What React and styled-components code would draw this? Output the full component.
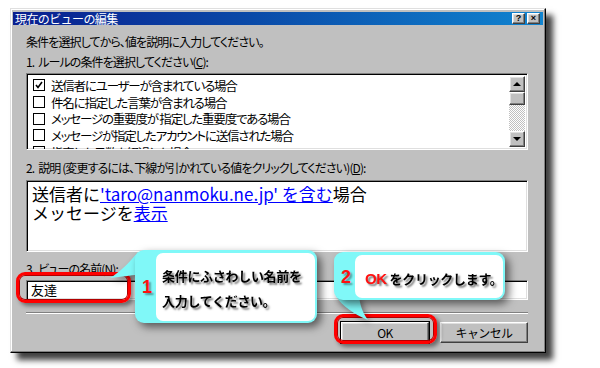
import React from 'react';
import styled, { createGlobalStyle, css } from 'styled-components';

const GlobalStyle = createGlobalStyle`
  html, body {
    margin: 0;
    padding: 0;
    background: #ffffff;
  }
  body {
    font-family: "Noto Sans CJK JP", "Liberation Sans", sans-serif;
    font-size: 12px;
    color: #000;
  }
`;

const jp = `"Noto Sans CJK JP", "Liberation Sans", sans-serif`;

const raised = css`
  border-style: solid;
  border-width: 1px;
  border-color: #ffffff #404040 #404040 #ffffff;
  box-shadow: inset -1px -1px 0 #808080, inset 1px 1px 0 #dfdfdf;
`;

const sunken = css`
  border-style: solid;
  border-width: 1px;
  border-color: #808080 #ffffff #ffffff #808080;
  box-shadow: inset 1px 1px 0 #000000, inset -1px -1px 0 #dfdfdf;
`;

const Page = styled.div`
  position: relative;
  width: 600px;
  height: 368px;
  overflow: hidden;
  padding: 8px 0 0 10px;
  box-sizing: border-box;
`;

const Dialog = styled.div`
  width: 536px;
  height: 345px;
  box-sizing: border-box;
  background: #c0c0c0;
  border-style: solid;
  border-width: 1px;
  border-color: #dfdfdf #000000 #000000 #dfdfdf;
  box-shadow: inset -1px -1px 0 #808080, inset 1px 1px 0 #ffffff,
    7px 7px 6px rgba(0, 0, 0, 0.75);
  padding: 3px 2px 2px 2px;
  display: flex;
  flex-direction: column;
`;

const TitleBar = styled.div`
  height: 13px;
  display: flex;
  align-items: center;
  justify-content: space-between;
  padding: 0 3px 0 2px;
  background: linear-gradient(to right, #0a1f8f 0%, #0a4aa8 45%, #1084d0 100%);
  color: #fff;
  font-size: 12px;
  line-height: 13px;
`;

const TitleText = styled.span`
  letter-spacing: -0.6px;
`;

const TitleButtons = styled.div`
  display: flex;
  gap: 2px;
`;

const TitleButton = styled.div`
  ${raised};
  width: 11px;
  height: 9px;
  background: #c0c0c0;
  color: #000;
  font: bold 9px/9px "Liberation Sans", sans-serif;
  text-align: center;
`;

const Body = styled.div`
  display: flex;
  flex-direction: column;
  padding: 10px 15px 0 13px;
`;

const Label = styled.div`
  font-size: 12px;
  line-height: 14px;
  letter-spacing: -0.9px;
  margin-top: ${(p) => p.$mt || 0}px;
  font-feature-settings: "palt";
  white-space: nowrap;
`;

const Num0 = styled.span`
  margin-right: 4px;
`;

const Key = styled.span`
  text-decoration: underline;
`;

const ListBox = styled.div`
  ${sunken};
  margin-top: 4px;
  height: 77px;
  background: #fff;
  display: flex;
  box-sizing: border-box;
  padding: 2px 2px 2px 2px;
  overflow: hidden;
`;

const ListItems = styled.div`
  flex: 1;
  padding: 1px 0 0 4px;
`;

const ListRow = styled.div`
  display: flex;
  align-items: center;
  height: 16.7px;
  font-size: 12.5px;
  letter-spacing: -1.2px;
  font-feature-settings: "palt";
  white-space: nowrap;
`;

const CheckBox = styled.span`
  width: 10px;
  height: 10px;
  border: 1px solid #000;
  margin-right: 6px;
  flex: none;
  display: flex;
  align-items: center;
  justify-content: center;
`;

const ScrollBar = styled.div`
  width: 16px;
  display: flex;
  flex-direction: column;
`;

const ScrollButton = styled.div`
  ${raised};
  box-sizing: border-box;
  width: 16px;
  height: ${(p) => p.$h || 16}px;
  background: #c0c0c0;
  display: flex;
  align-items: center;
  justify-content: center;
  flex: none;
`;

const Track = styled.div`
  flex: 1;
  background: repeating-conic-gradient(#ffffff 0 25%, #c0c0c0 0 50%) 0 0 / 2px 2px;
`;

const Arrow = styled.span`
  width: 0;
  height: 0;
  border-left: 4px solid transparent;
  border-right: 4px solid transparent;
  ${(p) =>
    p.$up
      ? css`border-bottom: 4px solid #000;`
      : css`border-top: 4px solid #000;`}
`;

const DescBox = styled.div`
  ${sunken};
  margin-top: 5px;
  height: 72px;
  background: #fff;
  box-sizing: border-box;
  padding: 3px 5px;
  font-size: 17px;
  line-height: 19px;
  letter-spacing: 0;
  white-space: nowrap;
`;

const Link = styled.span`
  color: #0000ff;
  text-decoration: underline;
`;

const TextInput = styled.div`
  ${sunken};
  margin-top: 4px;
  height: 20px;
  background: #fff;
  box-sizing: border-box;
  padding: 1px 4px;
  font-size: 13px;
  line-height: 16px;
`;

const Separator = styled.div`
  margin-top: 12px;
  height: 0;
  border-top: 1px solid #808080;
  border-bottom: 1px solid #ffffff;
`;

const ButtonRow = styled.div`
  display: flex;
  justify-content: flex-end;
  gap: 11px;
  margin-top: 8px;
`;

const PushButton = styled.div`
  ${raised};
  width: 88px;
  height: 21px;
  box-sizing: border-box;
  background: #c0c0c0;
  display: flex;
  align-items: center;
  justify-content: center;
  font-size: 12px;
  letter-spacing: -0.6px;
  ${(p) =>
    p.$default &&
    css`
      outline: 1px solid #000;
    `}
`;

const Highlight = styled.div`
  position: absolute;
  left: ${(p) => p.$x}px;
  top: ${(p) => p.$y}px;
  width: ${(p) => p.$w}px;
  height: ${(p) => p.$h}px;
  box-sizing: border-box;
  border: 3px solid #ff0000;
  border-radius: 9px;
  box-shadow: 3px 3px 4px rgba(0, 0, 0, 0.45), inset 0 0 0 1px #b00000;
`;

const Callout = styled.div`
  position: absolute;
  left: ${(p) => p.$x}px;
  top: ${(p) => p.$y}px;
  width: ${(p) => p.$w}px;
  height: ${(p) => p.$h}px;
  box-sizing: border-box;
  background: #80f8f8;
  border-radius: 9px;
  padding: 3px 2px 2px 21px;
  filter: drop-shadow(4px 4px 4px rgba(0, 0, 0, 0.55));
`;

const CalloutInner = styled.div`
  height: 100%;
  background: #fff;
  border-radius: 7px;
  box-sizing: border-box;
  padding: ${(p) => p.$pad};
  font-family: ${jp};
  font-weight: 700;
  font-size: 13px;
  line-height: 25px;
  letter-spacing: -0.3px;
  text-shadow: 2px 2px 2px rgba(0, 0, 0, 0.55);
  white-space: nowrap;
`;

const Num = styled.span`
  position: absolute;
  left: ${(p) => p.$x}px;
  top: ${(p) => p.$y}px;
  color: #ff1010;
  font: 700 18px/20px "Liberation Sans", sans-serif;
  text-shadow: 2px 2px 2px rgba(0, 0, 0, 0.4);
`;

const Red = styled.span`
  color: #ff1010;
  font-family: "Liberation Sans", sans-serif;
  font-size: 15px;
`;

const Tail = styled.svg`
  position: absolute;
  overflow: visible;
  filter: drop-shadow(3px 3px 3px rgba(0, 0, 0, 0.4));
`;

const rows = [
  '送信者にユーザーが含まれている場合',
  '件名に指定した言葉が含まれる場合',
  'メッセージの重要度が 指定した重要度である場合',
  'メッセージが指定したアカウントに送信された場合',
  '指定した日数を経過した場合',
];

export default function App() {
  return (
    <>
      <GlobalStyle />
      <Page>
        <Dialog>
          <TitleBar>
            <TitleText>現在のビューの編集</TitleText>
            <TitleButtons>
              <TitleButton>?</TitleButton>
              <TitleButton>×</TitleButton>
            </TitleButtons>
          </TitleBar>
          <Body>
            <Label>条件を選択してから、値を説明に入力してください。</Label>
            <Label $mt={6}>
              <Num0>1.</Num0>ルールの条件を選択してください(<Key>C</Key>):
            </Label>
            <ListBox>
              <ListItems>
                {rows.map((r, i) => (
                  <ListRow key={r}>
                    <CheckBox>
                      {i === 0 && (
                        <svg width="8" height="8" viewBox="0 0 8 8">
                          <path d="M1 4 L3 6.5 L7 1" fill="none" stroke="#000" strokeWidth="1.6" />
                        </svg>
                      )}
                    </CheckBox>
                    {r}
                  </ListRow>
                ))}
              </ListItems>
              <ScrollBar>
                <ScrollButton>
                  <Arrow $up />
                </ScrollButton>
                <ScrollButton $h={13} />
                <Track />
                <ScrollButton>
                  <Arrow />
                </ScrollButton>
              </ScrollBar>
            </ListBox>
            <Label $mt={11}>
              <Num0>2.</Num0>説明 (変更するには、下線が引かれている値をクリックしてください)(<Key>D</Key>):
            </Label>
            <DescBox>
              送信者に<Link>'taro@nanmoku.ne.jp' を含む</Link>場合
              <br />
              メッセージを<Link>表示</Link>
            </DescBox>
            <Label $mt={10}>
              <Num0>3.</Num0>ビューの名前(<Key>N</Key>):
            </Label>
            <TextInput>友達</TextInput>
            <Separator />
            <ButtonRow>
              <PushButton $default>OK</PushButton>
              <PushButton>キャンセル</PushButton>
            </ButtonRow>
          </Body>
        </Dialog>

        <Highlight $x={16} $y={272} $w={115} $h={31} />
        <Highlight $x={334} $y={314} $w={103} $h={30} />

        <Tail style={{ left: 108, top: 250 }} width="30" height="30">
          <path d="M30 2 C 20 14, 12 22, 2 28 C 14 27, 22 25, 30 25 Z" fill="#80f8f8" />
        </Tail>
        <Callout $x={135} $y={250} $w={182} $h={73}>
          <CalloutInner $pad="10px 0 0 6px">
            条件にふさわしい名前を
            <br />
            入力してください。
          </CalloutInner>
        </Callout>
        <Num $x={142} $y={277}>1</Num>

        <Tail style={{ left: 336, top: 296 }} width="34" height="26">
          <path d="M0 0 C 6 10, 18 18, 32 24 C 26 16, 24 8, 23 0 Z" fill="#80f8f8" />
        </Tail>
        <Callout $x={334} $y={252} $w={171} $h={48}>
          <CalloutInner $pad="11px 0 0 10px">
            <Red>OK</Red> をクリックします。
          </CalloutInner>
        </Callout>
        <Num $x={341} $y={267}>2</Num>
      </Page>
    </>
  );
}
